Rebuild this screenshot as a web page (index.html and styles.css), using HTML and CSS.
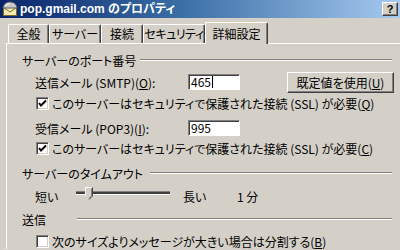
FILE: index.html
```html
<!DOCTYPE html>
<html>
<head>
<title>pop.gmail.com のプロパティ</title>
<link rel="stylesheet" href="styles.css">
</head>
<body>
<div class="window">
  <div class="titlebar">
    <svg class="title-icon" width="16" height="16" viewBox="0 0 16 16">
      <rect x="1.5" y="6.5" width="13" height="8" fill="#f4ecb0" stroke="#7a6a20"/>
      <polyline points="1.5,6.5 8,11 14.5,6.5" fill="none" stroke="#7a6a20"/>
      <path d="M1 7 Q2 1 8 1 Q14 1 15 7 Z" fill="#c8c8c8" stroke="#606060"/>
      <path d="M3 5 Q5 2.5 8 2.5" fill="none" stroke="#ffffff"/>
    </svg>
    <span class="title-text">pop.gmail.com のプロパティ</span>
    <button type="button" class="help-btn">?</button>
  </div>

  <div class="tabs">
    <div class="tab tab-general">全般</div>
    <div class="tab tab-server">サーバー</div>
    <div class="tab tab-conn">接続</div>
    <div class="tab tab-sec">セキュリティ</div>
    <div class="tab tab-adv active">詳細設定</div>
  </div>

  <div class="panel">
    <div class="group-head head-port"><span>サーバーのポート番号</span></div>

    <div class="row row-smtp">
      <span class="label">送信メール (SMTP)(<u>O</u>):</span>
      <span class="field">465<span class="caret"></span></span>
      <button type="button" class="btn">既定値を使用(<u>U</u>)</button>
    </div>
    <div class="check-row first">
      <span class="check">
        <svg width="9" height="9" viewBox="0 0 9 9"><polyline points="1,4 3,6.5 8,1.5" fill="none" stroke="#000" stroke-width="2"/></svg>
      </span>
      <span>このサーバーはセキュリティで保護された接続 (SSL) が必要(<u>Q</u>)</span>
    </div>

    <div class="row row-pop">
      <span class="label">受信メール (POP3)(<u>I</u>):</span>
      <span class="field">995</span>
    </div>
    <div class="check-row first">
      <span class="check">
        <svg width="9" height="9" viewBox="0 0 9 9"><polyline points="1,4 3,6.5 8,1.5" fill="none" stroke="#000" stroke-width="2"/></svg>
      </span>
      <span>このサーバーはセキュリティで保護された接続 (SSL) が必要(<u>C</u>)</span>
    </div>

    <div class="group-head head-timeout"><span>サーバーのタイムアウト</span></div>
    <div class="row row-slider">
      <span class="short">短い</span>
      <span class="track">
        <svg class="thumb" width="8" height="13" viewBox="0 0 8 13">
          <path d="M0.5 0.5 H7.5 V9 L4 12.5 L0.5 9 Z" fill="#d4d0c8"/>
          <path d="M7.5 0.5 V9 L4 12.5" fill="none" stroke="#404040"/>
          <path d="M0.5 9 V0.5 H7" fill="none" stroke="#ffffff"/>
          <path d="M6.5 1.5 V8.6 L4 11.2" fill="none" stroke="#808080"/>
        </svg>
      </span>
      <span class="long">長い</span>
      <span>1 分</span>
    </div>

    <div class="group-head head-send"><span>送信</span></div>
    <div class="check-row last">
      <span class="check"></span>
      <span>次のサイズよりメッセージが大きい場合は分割する(<u>B</u>)</span>
    </div>
  </div>
</div>
</body>
</html>
```

FILE: styles.css
```css
html, body {
  margin: 0;
  padding: 0;
}
body {
  width: 400px;
  height: 250px;
  overflow: hidden;
  background: #d4d0c8;
  font-family: "Noto Sans CJK JP", "Liberation Sans", sans-serif;
  font-size: 12px;
  font-feature-settings: "palt";
  color: #000;
}
u { text-underline-offset: 1px; }

/* title bar */
.titlebar {
  height: 18px;
  display: flex;
  align-items: center;
  background: linear-gradient(to right, #0a246a, #3a6ea5 45%, #a6caf0);
  padding: 0 2px 0 2px;
}
.title-icon { margin-right: 2px; }
.title-text {
  flex: 1;
  color: #fff;
  font-weight: bold;
  font-size: 12px;
  font-family: "Liberation Sans", "Noto Sans CJK JP", sans-serif;
  line-height: 18px;
}
.help-btn {
  width: 16px;
  height: 14px;
  padding: 0;
  margin: 0;
  background: #d4d0c8;
  border: 1px solid;
  border-color: #fff #404040 #404040 #fff;
  box-shadow: inset -1px -1px 0 #808080;
  font: bold 11px "Liberation Sans", sans-serif;
  line-height: 12px;
  color: #000;
}

/* tabs */
.tabs {
  display: flex;
  align-items: flex-end;
  height: 21px;
  margin: 4px 0 0 8px;
}
.tab {
  box-sizing: border-box;
  height: 19px;
  line-height: 18px;
  text-align: center;
  white-space: nowrap;
  border-top: 1px solid #fff;
  border-left: 1px solid #fff;
  border-right: 1px solid #404040;
  box-shadow: inset -1px 0 0 #808080;
  border-radius: 2px 2px 0 0;
}
.tab-general { width: 41px; }
.tab-server { width: 52px; }
.tab-conn { width: 42px; }
.tab-sec { width: 62px; letter-spacing: -0.5px; }
.tab-adv { width: 63px; }
.tab.active {
  height: 22px;
  line-height: 21px;
  margin-bottom: -1px;
  background: #d4d0c8;
  position: relative;
  z-index: 1;
}

/* panel */
.panel {
  margin-left: 6px;
  border-top: 1px solid #fff;
  border-left: 1px solid #fff;
  padding: 8px 6px 0 15px;
}
.group-head {
  display: flex;
  align-items: center;
  height: 16px;
  margin-right: 2px;
}
.group-head::after {
  content: "";
  flex: 1;
  height: 0;
  border-top: 1px solid #808080;
  border-bottom: 1px solid #fff;
}
.head-port span { width: 118px; }
.head-timeout { margin-top: 9px; }
.head-timeout span { width: 128px; }
.head-send { margin-top: 5px; }
.head-send span { width: 55px; }

.row {
  display: flex;
  align-items: center;
  padding-left: 13px;
}
.row-smtp { height: 22px; margin-top: 3px; }
.row-pop { height: 20px; margin-top: 7px; }
.row-slider { height: 20px; margin-top: 5px; }
.label { width: 153px; }

.field {
  width: 48px;
  height: 14px;
  line-height: 14px;
  padding: 0 0 0 2px;
  background: #fff;
  border: 1px solid;
  border-color: #808080 #fff #fff #808080;
  box-shadow: inset 1px 1px 0 #404040;
  display: flex;
  align-items: center;
}
.caret {
  width: 1px;
  height: 12px;
  background: #000;
  margin-left: 1px;
}
.btn {
  margin-left: auto;
  width: 107px;
  height: 21px;
  padding: 0;
  background: #d4d0c8;
  border: 1px solid;
  border-color: #fff #404040 #404040 #fff;
  box-shadow: inset -1px -1px 0 #808080;
  font: inherit;
  color: #000;
}

.check-row {
  display: flex;
  align-items: center;
  height: 16px;
  padding-left: 14px;
}
.check-row.first { margin-top: 2px; }
.check-row.last { margin-top: 6px; }
.check {
  width: 11px;
  height: 11px;
  margin-right: 3px;
  background: #fff;
  border: 1px solid;
  border-color: #808080 #fff #fff #808080;
  box-shadow: inset 1px 1px 0 #404040, inset -1px -1px 0 #d4d0c8;
  display: flex;
  align-items: center;
  justify-content: center;
}

.short { width: 41px; }
.track {
  width: 94px;
  height: 2px;
  border-top: 1px solid #808080;
  border-bottom: 1px solid #fff;
  background: #404040;
  margin-top: -6px;
  position: relative;
}
.thumb {
  position: absolute;
  left: 9px;
  top: -5px;
}
.long {
  width: 54px;
  margin-left: 13px;
}
```
